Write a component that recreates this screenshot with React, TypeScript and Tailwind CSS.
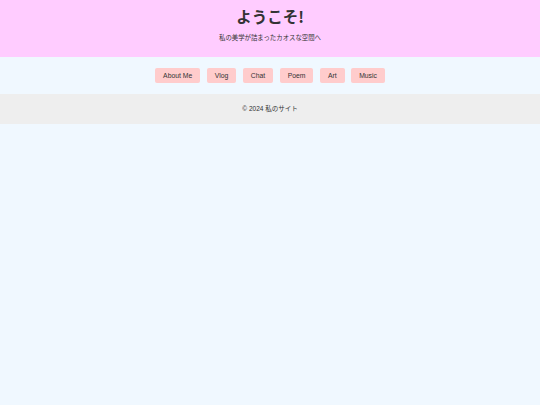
import React from "react";

const font = '"Liberation Sans", Arial, "Noto Sans CJK JP", sans-serif';

export default function App() {
  const items = ["About Me", "Vlog", "Chat", "Poem", "Art", "Music"];
  return (
    <div className="min-h-[405px] bg-[#f0f8ff] text-[#333333]" style={{ fontFamily: font }}>
      <header className="h-[57px] bg-[#ffccff] flex flex-col items-center pt-[6px]">
        <h1
          className="text-[15.5px] font-bold leading-[20px]"
          style={{ fontFamily: '"Noto Sans CJK JP", sans-serif' }}
        >
          ようこそ!
        </h1>
        <p className="mt-[7px] text-[6.4px] leading-[10px]">私の美学が詰まったカオスな空間へ</p>
      </header>
      <nav className="h-[37px] flex items-center justify-center gap-[6.5px]">
        {items.map((t) => (
          <button
            key={t}
            className="h-[15px] px-[8px] bg-[#ffcccc] rounded-[2px] text-[6.8px] text-[#333333] leading-[15px]"
            style={{ fontFamily: font }}
          >
            {t}
          </button>
        ))}
      </nav>
      <footer className="h-[30px] bg-[#eeeeee] flex items-center justify-center text-[6.5px]">
        © 2024 私のサイト
      </footer>
    </div>
  );
}
